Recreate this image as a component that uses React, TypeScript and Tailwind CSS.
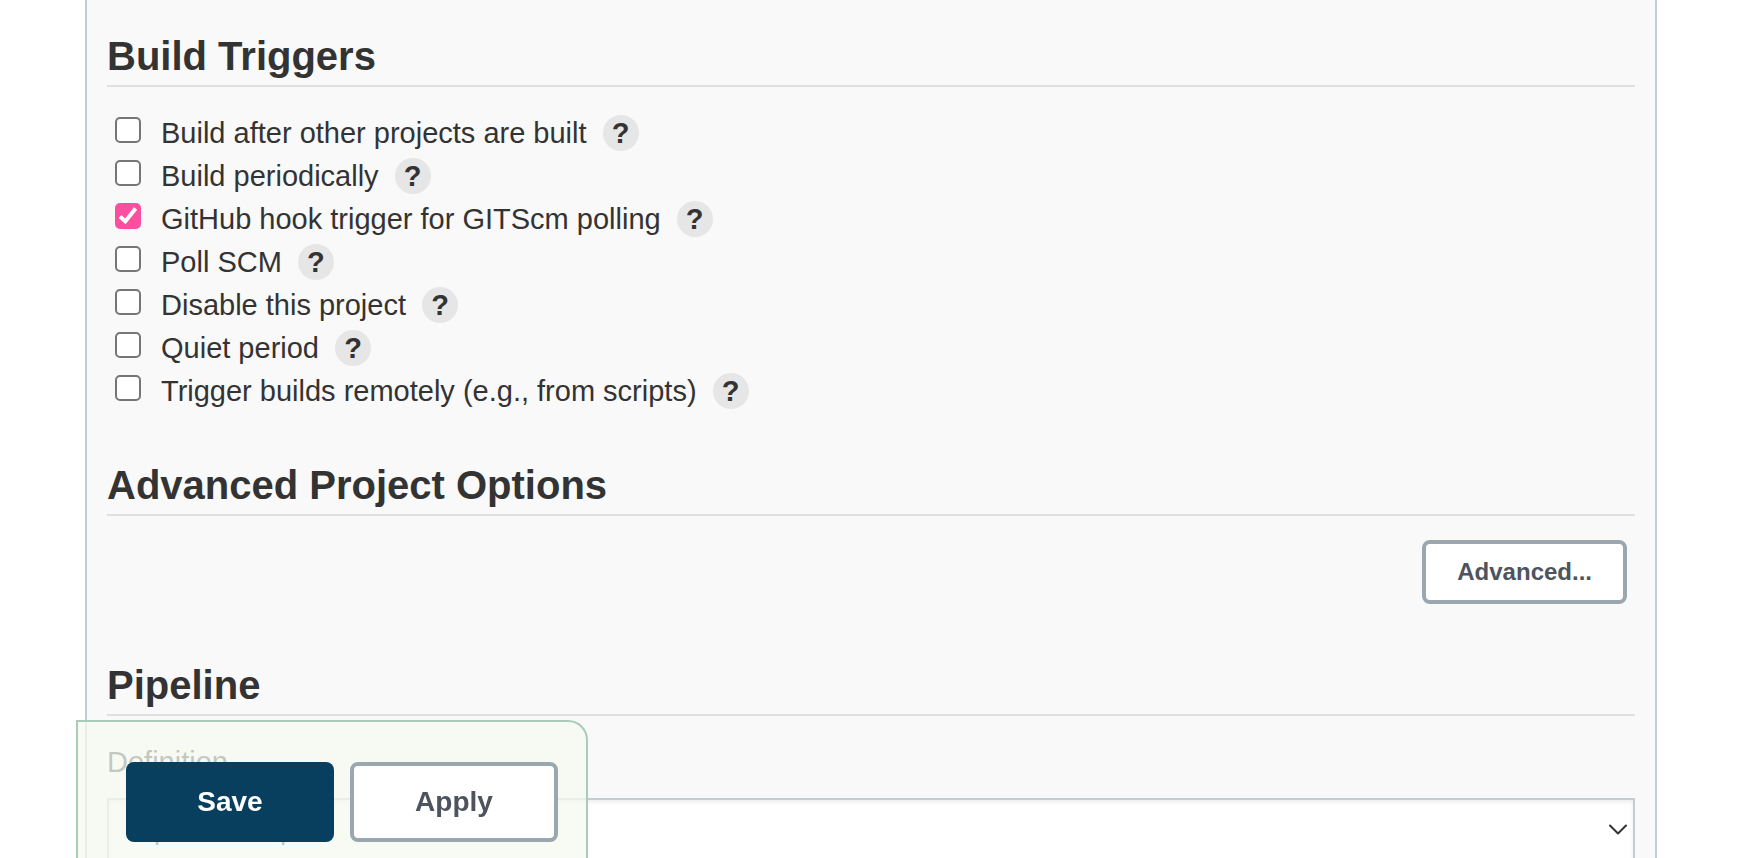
import React, { useId, useState } from "react";

const triggers = [
  { label: "Build after other projects are built", checked: false },
  { label: "Build periodically", checked: false },
  { label: "GitHub hook trigger for GITScm polling", checked: true },
  { label: "Poll SCM", checked: false },
  { label: "Disable this project", checked: false },
  { label: "Quiet period", checked: false },
  { label: "Trigger builds remotely (e.g., from scripts)", checked: false },
];

function SectionHeading({ children }: { children: React.ReactNode }) {
  return (
    <h2 className="border-b-2 border-[#dfe0e0] pt-[3px] pb-[5px] text-[40px] leading-12 font-bold">{children}</h2>
  );
}

function TriggerRow({ label, checked }: { label: string; checked: boolean }) {
  const id = useId();
  const [on, setOn] = useState(checked);
  return (
    <li className="flex h-[43px] items-start">
      <span className="mt-1 mr-5 grid size-[26px] shrink-0">
        <input
          id={id}
          type="checkbox"
          checked={on}
          onChange={(e) => setOn(e.target.checked)}
          className="peer col-start-1 row-start-1 size-[26px] appearance-none rounded-[5px] border-2 border-[#767676] bg-white checked:border-[#fc4f9f] checked:bg-[#fc4f9f]"
        />
        <svg
          viewBox="0 0 26 26"
          className="pointer-events-none invisible col-start-1 row-start-1 size-[26px] peer-checked:visible"
          fill="none"
          stroke="white"
          strokeWidth="4"
          aria-hidden="true"
        >
          <path d="M5 13.6 L10.3 18.4 L20.6 5.4" />
        </svg>
      </span>
      <label htmlFor={id} className="mt-1 text-[29px] leading-8">
        {label}
      </label>
      <button
        type="button"
        aria-label={`Help for feature: ${label}`}
        className="mt-[2px] ml-4 flex size-9 shrink-0 items-center justify-center rounded-full bg-[#e6e6e6] text-[29px] leading-8 font-bold"
      >
        ?
      </button>
    </li>
  );
}

export default function App() {
  return (
    <div className="h-screen overflow-hidden bg-white pr-[107px] pl-[85px] font-['Liberation_Sans',Arial,sans-serif] text-[#333333]">
      <main className="min-h-screen border-x-2 border-[#c2ccd1] bg-[#f9f9f9] px-5 pt-[29px]">
        <section>
          <SectionHeading>Build Triggers</SectionHeading>
          <ul className="mt-[26px] pl-2">
            {triggers.map((t) => (
              <TriggerRow key={t.label} label={t.label} checked={t.checked} />
            ))}
          </ul>
        </section>

        <section className="mt-11">
          <SectionHeading>Advanced Project Options</SectionHeading>
          <div className="flex justify-end pt-6 pr-2">
            <button
              type="button"
              className="h-16 rounded-lg border-4 border-[#9aa7af] bg-white px-[31px] text-2xl font-bold text-[#4d545d]"
            >
              Advanced...
            </button>
          </div>
        </section>

        <section className="mt-[54px]">
          <SectionHeading>Pipeline</SectionHeading>
          <label htmlFor="definition" className="mt-[30px] block text-[29px] leading-8">
            Definition
          </label>
          <div className="relative mt-5">
            <select
              id="definition"
              className="block h-16 w-full appearance-none border-2 border-[#c2ccd1] bg-white px-5 text-[28px] leading-8 shadow-[inset_0_2px_4px_rgba(0,0,0,0.08)]"
            >
              <option>Pipeline script</option>
              <option>Pipeline script from SCM</option>
            </select>
            <svg
              viewBox="0 0 18 12"
              className="pointer-events-none absolute top-[26px] right-2 h-3 w-[18px]"
              fill="none"
              stroke="#333333"
              strokeWidth="2"
              aria-hidden="true"
            >
              <path d="M1 1.5 L9 9.5 L17 1.5" strokeLinecap="round" strokeLinejoin="round" />
            </svg>
          </div>
        </section>
      </main>

      <div className="fixed bottom-0 left-[76px] flex gap-4 rounded-tr-[20px] border-2 border-b-0 border-[#a9cbbb] bg-[rgba(245,249,239,0.75)] pt-10 pr-7 pb-4 pl-12">
        <button
          type="button"
          className="h-20 w-52 rounded-lg bg-[#083f5f] text-[28px] font-bold text-white"
        >
          Save
        </button>
        <button
          type="button"
          className="h-20 w-52 rounded-lg border-4 border-[#9aa7af] bg-white text-[28px] font-bold text-[#4d545d]"
        >
          Apply
        </button>
      </div>
    </div>
  );
}
